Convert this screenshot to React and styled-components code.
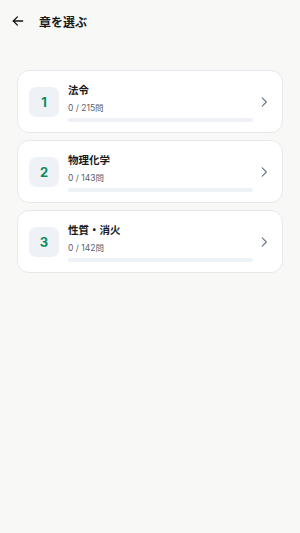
import React from 'react';
import styled, { createGlobalStyle } from 'styled-components';

const GlobalStyle = createGlobalStyle`
    body {
        margin: 0;
        background: #f8f8f7;
        font-family: 'Inter', 'Noto Sans CJK JP', sans-serif;
    }
`;

const PAGE = styled.div`
    min-height: 533px;
    background: #f8f8f7;
`;

const HEADER = styled.div`
    display: flex;
    align-items: center;
    height: 42px;
    padding: 0 11px;
    gap: 14px;
`;

const BACK = styled.button`
    border: none;
    background: none;
    padding: 0;
    width: 14px;
    height: 14px;
    display: flex;
    align-items: center;
    justify-content: center;
    color: #111;
`;

const TITLE = styled.h1`
    margin: 0;
    font-size: 12px;
    font-weight: 700;
    color: #1a1a1a;
`;

const LIST = styled.div`
    display: flex;
    flex-direction: column;
    gap: 7px;
    padding: 28px 17px 0;
`;

const CARD = styled.div`
    display: flex;
    align-items: center;
    height: 63px;
    box-sizing: border-box;
    background: #fff;
    border: 1px solid #e6e8ec;
    border-radius: 12px;
    padding: 0 13px 0 11px;
`;

const NUM = styled.div`
    width: 30px;
    height: 30px;
    border-radius: 7px;
    background: #eef2f6;
    color: #0f8a5c;
    font-weight: 700;
    font-size: 13px;
    display: flex;
    align-items: center;
    justify-content: center;
    flex-shrink: 0;
`;

const BODY = styled.div`
    flex: 1;
    margin-left: 9px;
    display: flex;
    flex-direction: column;
    padding-top: 3px;
`;

const NAME = styled.div`
    font-size: 10.5px;
    font-weight: 700;
    color: #1a1a1a;
    line-height: 14px;
`;

const COUNT = styled.div`
    font-size: 8.5px;
    color: #5b616b;
    margin-top: 4px;
    line-height: 12px;
`;

const BAR = styled.div`
    height: 4px;
    width: 185px;
    border-radius: 2px;
    background: #eef1f5;
    margin-top: 4px;
    overflow: hidden;
`;

const FILL = styled.div`
    height: 100%;
    background: #0f8a5c;
`;

const CHEVRON = styled.div`
    display: flex;
    color: #6b778c;
    margin-left: 4px;
`;

const chapters = [
    { no: 1, name: '法令', done: 0, total: 215 },
    { no: 2, name: '物理化学', done: 0, total: 143 },
    { no: 3, name: '性質・消火', done: 0, total: 142 },
];

const App = () => {
    return (
        <PAGE>
            <GlobalStyle />
            <HEADER>
                <BACK>
                    <svg width="14" height="14" viewBox="0 0 24 24" fill="none" stroke="currentColor" strokeWidth="2.2" strokeLinecap="round" strokeLinejoin="round">
                        <path d="M20 12H4" />
                        <path d="M11 5l-7 7 7 7" />
                    </svg>
                </BACK>
                <TITLE>章を選ぶ</TITLE>
            </HEADER>
            <LIST>
                {chapters.map(c => (
                    <CARD key={c.no}>
                        <NUM>{c.no}</NUM>
                        <BODY>
                            <NAME>{c.name}</NAME>
                            <COUNT>{c.done} / {c.total}問</COUNT>
                            <BAR>
                                <FILL style={{ width: `${(c.done / c.total) * 100}%` }} />
                            </BAR>
                        </BODY>
                        <CHEVRON>
                            <svg width="14" height="14" viewBox="0 0 24 24" fill="none" stroke="currentColor" strokeWidth="2" strokeLinecap="round" strokeLinejoin="round">
                                <path d="M9 5l7 7-7 7" />
                            </svg>
                        </CHEVRON>
                    </CARD>
                ))}
            </LIST>
        </PAGE>
    );
};

export default App;
